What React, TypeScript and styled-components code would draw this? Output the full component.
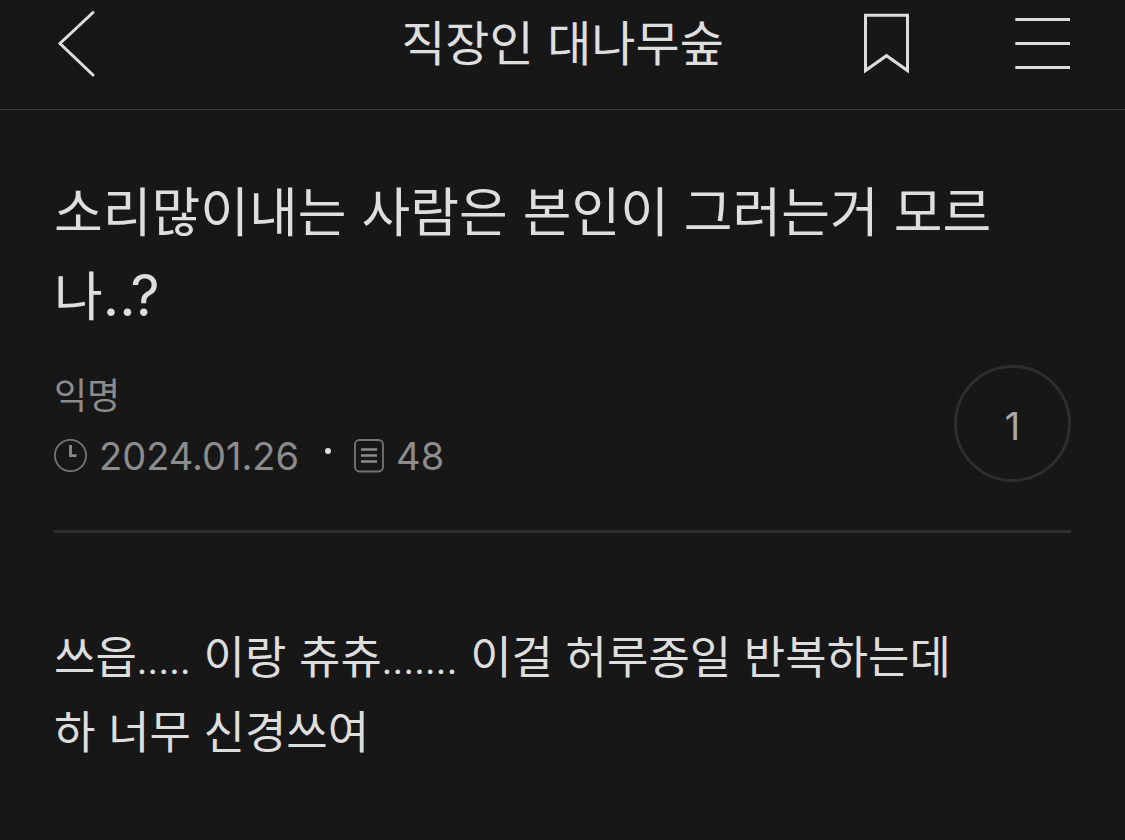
import React from "react";
import styled, { createGlobalStyle } from "styled-components";

const Global = createGlobalStyle`
  * { box-sizing: border-box; }
  body { margin: 0; background: #171717; color: #dedede; font-family: Inter, "Noto Sans CJK KR", sans-serif; }
  h1, h2, p { margin: 0; font-weight: 400; }
`;

const Page = styled.div`min-height: 100vh; background: #171717;`;

const Header = styled.header`
  display: grid;
  grid-template-columns: 1fr auto 1fr;
  align-items: center;
  height: 110px;
  padding: 0 54px 22px;
  border-bottom: 1px solid #3a3a3a;
`;

const HeaderTitle = styled.h1`
  font-size: 48px;
  line-height: 64px;
  white-space: nowrap;
`;

const Actions = styled.div`
  display: flex;
  justify-content: flex-end;
  gap: 104px;
`;

const IconButton = styled.button`
  display: flex;
  padding: 0;
  border: 0;
  background: none;
  color: #dedede;
`;

const Article = styled.article`padding: 61px 54px;`;

const PostTitle = styled.h2`
  font-size: 53px;
  line-height: 84px;
`;

const TitleMarks = styled.span`
  font-size: 57px;
  line-height: 1;
`;

const Info = styled.div`
  display: flex;
  justify-content: space-between;
  align-items: flex-start;
  padding: 26px 0 44px;
  border-bottom: 3px solid #2e2e2e;
`;

const Details = styled.div`padding-top: 1px;`;

const Author = styled.p`
  font-size: 36px;
  line-height: 60px;
  color: #8c8c8c;
`;

const Meta = styled.div`
  display: flex;
  align-items: center;
  font-size: 38px;
  line-height: 60px;
  color: #8c8c8c;
`;

const MetaItem = styled.span`
  display: flex;
  align-items: center;
  gap: 12px;
`;

const Dot = styled.span`
  width: 6px;
  height: 6px;
  margin: 0 23px 10px 26px;
  border-radius: 50%;
  background: #dedede;
`;

const CountButton = styled.button`
  width: 117px;
  height: 117px;
  padding: 5px 0 0;
  border: 3px solid #2e2e2e;
  border-radius: 50%;
  background: none;
  color: #a8a8a8;
  font: 400 38px Inter, sans-serif;
`;

const Body = styled.p`
  padding-top: 87px;
  font-size: 45px;
  line-height: 75px;
`;

const Dots = styled.span`
  font-family: Roboto, sans-serif;
  font-size: 41px;
  line-height: 1;
`;

export default function App() {
  return (
    <Page>
      <Global />
      <Header>
        <IconButton aria-label="뒤로">
          <svg width="44" height="68" viewBox="0 0 44 68" fill="none" stroke="currentColor" strokeWidth="3" strokeLinecap="round">
            <path d="M39 2.500 6 33.500 39 65" />
          </svg>
        </IconButton>
        <HeaderTitle>직장인 대나무숲</HeaderTitle>
        <Actions>
          <IconButton aria-label="북마크">
            <svg width="48" height="62" viewBox="0 0 48 62" fill="none" stroke="currentColor" strokeWidth="3">
              <path d="M2.500 2.200H44.500V57.500L23.500 42.700 2.500 57.500Z" />
            </svg>
          </IconButton>
          <IconButton aria-label="메뉴">
            <svg width="56" height="62" viewBox="0 0 56 62" fill="none" stroke="currentColor" strokeWidth="3">
              <path d="M0.300 6.500H55M0.300 30.500H55M0.300 54.500H55" />
            </svg>
          </IconButton>
        </Actions>
      </Header>
      <Article>
        <PostTitle>
          소리많이내는 사람은 본인이 그러는거 모르
          <br />
          나<TitleMarks>..?</TitleMarks>
        </PostTitle>
        <Info>
          <Details>
            <Author>익명</Author>
            <Meta>
              <MetaItem>
                <svg width="33" height="34" viewBox="0 0 33 34" fill="none">
                  <circle cx="16.500" cy="16.500" r="15.600" stroke="#747474" strokeWidth="1.800" />
                  <path d="M16.500 6V16.700H22.500" stroke="#8c8c8c" strokeWidth="2.800" />
                </svg>
                <time dateTime="2024-01-26">2024.01.26</time>
              </MetaItem>
              <Dot />
              <MetaItem>
                <svg width="30" height="34" viewBox="0 0 30 34" fill="none">
                  <rect x="1" y="1" width="28" height="31.500" rx="4.500" stroke="#747474" strokeWidth="1.800" />
                  <path d="M7 10.500H23M7 16.500H23M7 22.500H23" stroke="#8c8c8c" strokeWidth="2.600" />
                </svg>
                <span>48</span>
              </MetaItem>
            </Meta>
          </Details>
          <CountButton aria-label="추천 1">1</CountButton>
        </Info>
        <Body>
          쓰읍<Dots>.....</Dots> 이랑 츄츄<Dots>.......</Dots> 이걸 허루종일 반복하는데
          <br />
          하 너무 신경쓰여
        </Body>
      </Article>
    </Page>
  );
}
